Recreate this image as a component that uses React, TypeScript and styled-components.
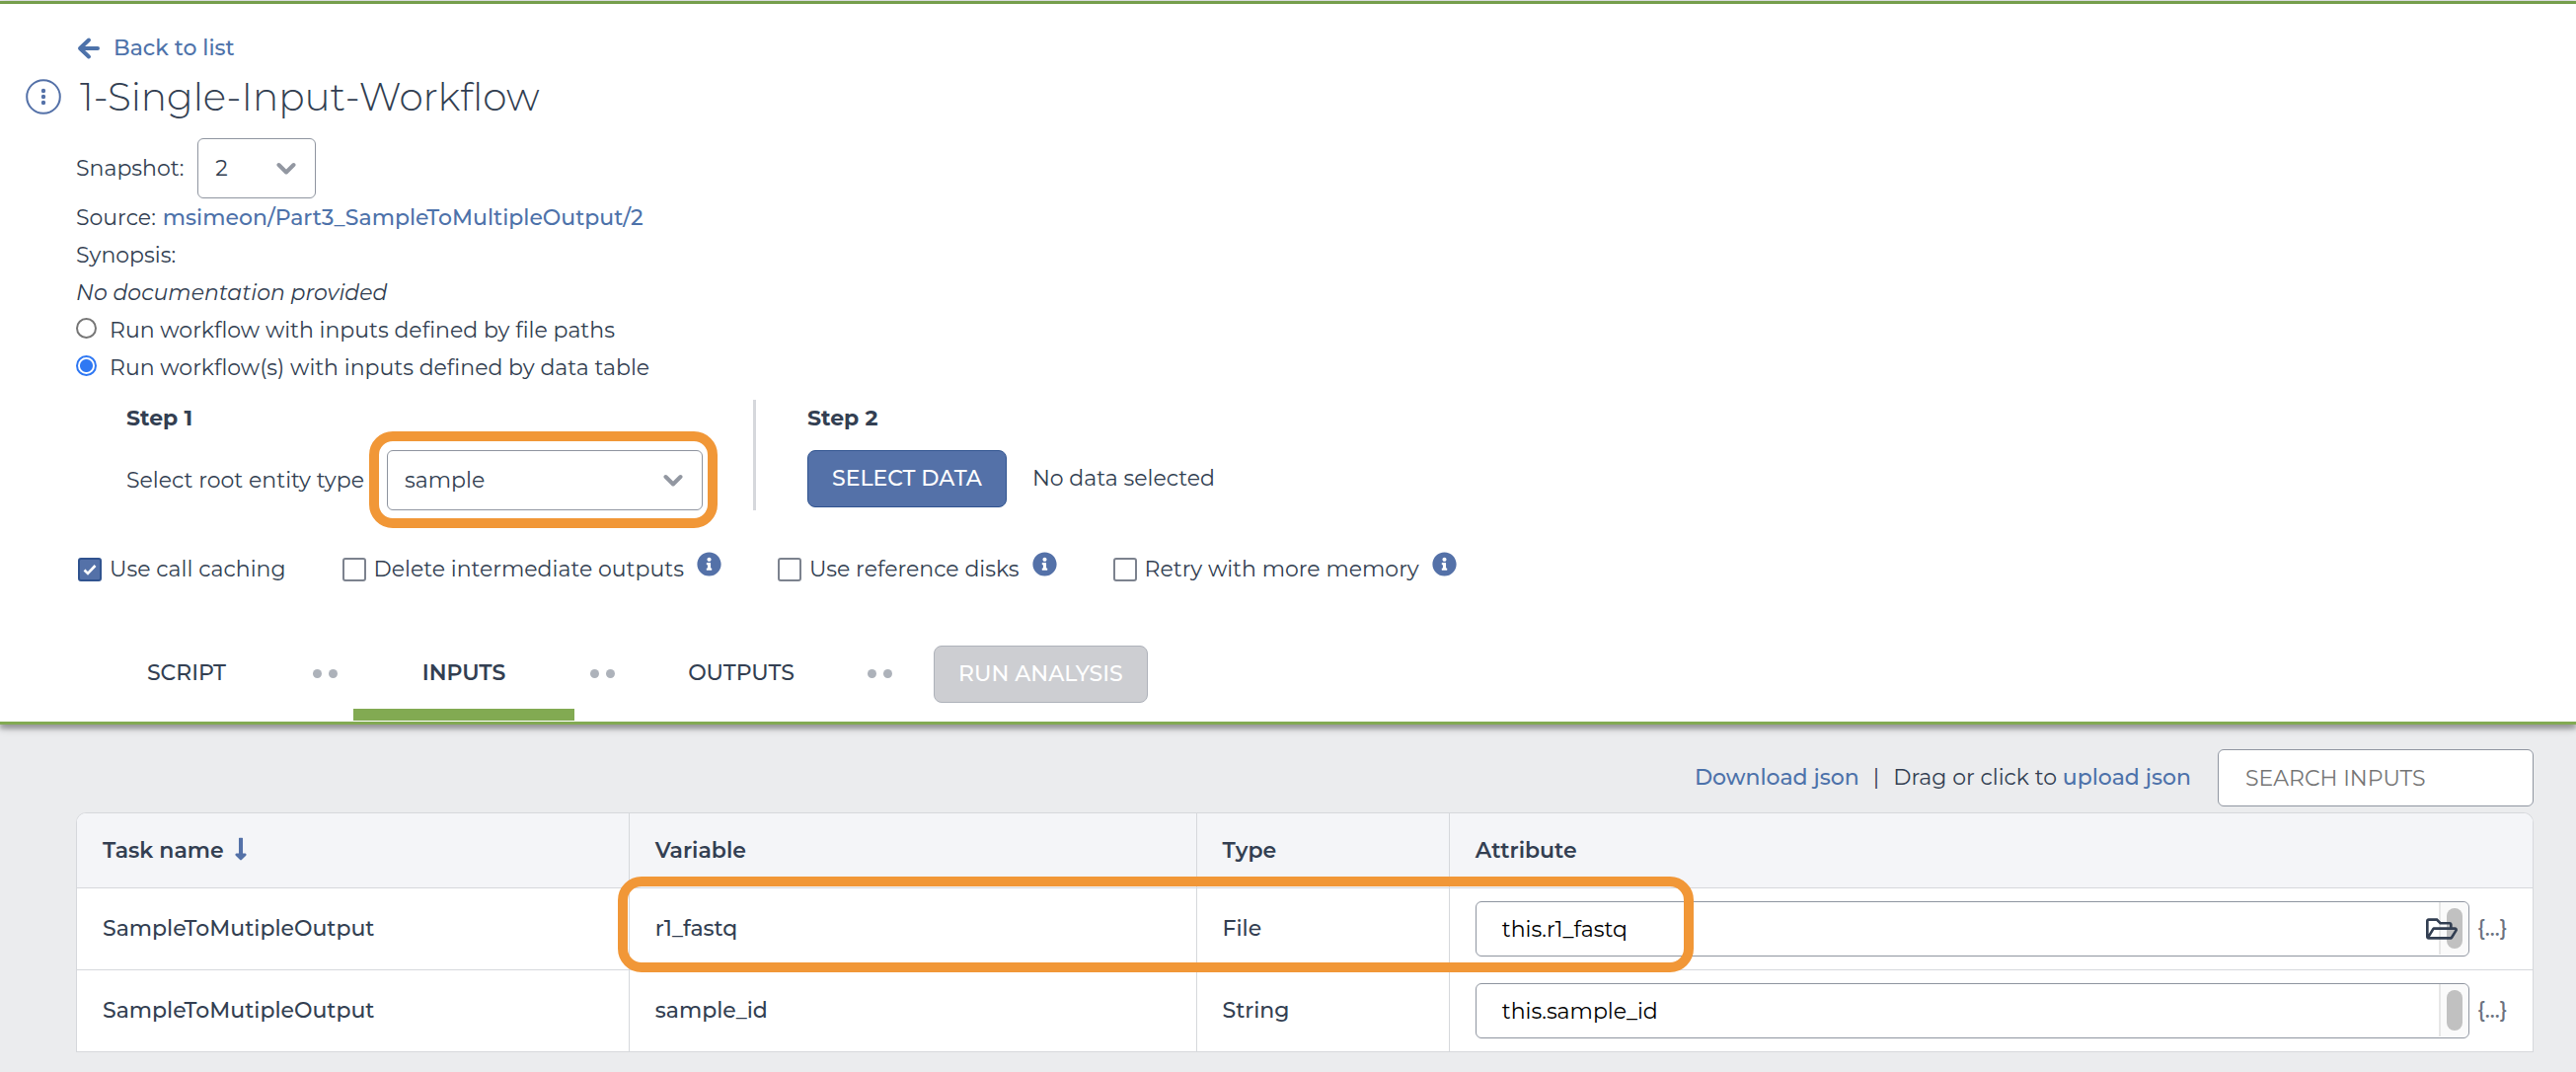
import React from 'react';
import styled, { createGlobalStyle } from 'styled-components';
import { FaInfoCircle, FaLongArrowAltDown, FaRegFolderOpen } from 'react-icons/fa';

const color = {
  text: '#333f52',
  link: '#4d72aa',
  accent: '#5471a8',
  accentDark: '#30538f',
  green: '#82aa52',
  border: '#8f95a0',
  line: '#d6d8dc',
  panel: '#ebecee',
  highlight: '#f19737',
};

const GlobalStyle = createGlobalStyle`
  *, *::before, *::after { box-sizing: border-box; }
  body {
    margin: 0;
    background: ${color.panel};
    color: ${color.text};
    font-family: Montserrat, Inter, 'Open Sans', sans-serif;
    font-size: 22px;
    line-height: 38px;
  }
  button, input, select, textarea { font: inherit; color: inherit; margin: 0; }
`;

const Header = styled.header`
  position: relative;
  margin-top: 1px;
  padding: 26px 43px 0 77px;
  background: #fff;
  border-top: 3px solid #769f4c;
  border-bottom: 3px solid ${color.green};
  box-shadow: 0 3px 8px rgba(0, 0, 0, 0.35), 0 5px 3px rgba(0, 0, 0, 0.12);
`;

const Link = styled.a<{ $strong?: boolean }>`
  color: ${color.link};
  font-weight: ${(p) => (p.$strong ? 500 : 400)};
  text-decoration: none;
`;

const BackLink = styled(Link)`
  display: flex;
  align-items: center;
  gap: 13px;
  width: fit-content;
  font-weight: 500;
`;

const TitleRow = styled.div`
  display: flex;
  align-items: center;
  gap: 19px;
  margin: 7px 0 19px -51px;
`;

const Title = styled.h1`
  margin: 0;
  font-size: 39px;
  line-height: 46px;
  font-weight: 300;
`;

const MenuButton = styled.button`
  display: flex;
  padding: 0;
  border: 0;
  background: none;
  color: ${color.accent};
`;

const Line = styled.div`
  display: flex;
  align-items: center;
  gap: 7px;
`;

const SnapshotLine = styled(Line)`
  gap: 14px;
  margin-bottom: 1px;
`;

const Italic = styled.em`
  font-style: italic;
`;

const SelectBox = styled.div<{ $width: number }>`
  position: relative;
  width: ${(p) => p.$width}px;

  select {
    appearance: none;
    display: block;
    width: 100%;
    height: 61px;
    padding: 0 50px 0 17px;
    border: 1px solid ${color.border};
    border-radius: 6px;
    background: #fff;
  }

  > svg {
    position: absolute;
    right: 20px;
    top: 24px;
    pointer-events: none;
  }
`;

const Highlight = styled.span`
  position: absolute;
  border: 10px solid ${color.highlight};
  border-radius: 24px;
  pointer-events: none;
`;

const SelectHighlight = styled(Highlight)`
  inset: -19px -15px -18px -18px;
`;

const RadioLabel = styled.label`
  display: flex;
  align-items: center;
  gap: 13px;
`;

const Radio = styled.input`
  appearance: none;
  flex: none;
  width: 21px;
  height: 21px;
  margin-bottom: 6px;
  border: 2px solid #767676;
  border-radius: 50%;
  background: #fff;

  &:checked {
    border-color: #2f78f3;
    background: radial-gradient(circle, #2f78f3 6px, #fff 7px);
  }
`;

const Steps = styled.div`
  display: flex;
  margin: 13px 0 41px 51px;
`;

const Step = styled.section`
  display: flex;
  flex-direction: column;
  gap: 13px;

  & + & {
    margin-left: 51px;
    padding-left: 52px;
    border-left: 3px solid ${color.line};
  }
`;

const StepTitle = styled.h2`
  margin: 0;
  font-size: 22px;
  font-weight: 700;
`;

const StepRow = styled.div<{ $gap: number }>`
  display: flex;
  align-items: center;
  gap: ${(p) => p.$gap}px;
`;

const EntityLabel = styled.label`
  width: 246px;
  white-space: nowrap;
`;

const Button = styled.button`
  height: 58px;
  padding: 0 24px;
  border: 1px solid ${color.accentDark};
  border-radius: 8px;
  background: ${color.accent};
  color: #fff;
  font-weight: 500;
  white-space: nowrap;

  &:disabled {
    border-color: #aeb2ba;
    background: #cdced2;
  }
`;

const Options = styled.div`
  display: flex;
  gap: 57px;
  padding-left: 2px;
  margin-bottom: 38px;
`;

const Option = styled.div`
  display: flex;
  align-items: center;
  gap: 13px;

  > svg {
    margin-bottom: 11px;
    color: ${color.accent};
  }
`;

const CheckLabel = styled.label`
  position: relative;
  display: flex;
  align-items: center;
  gap: 8px;

  svg {
    position: absolute;
    left: 4px;
    top: 11px;
  }
`;

const Checkbox = styled.input`
  appearance: none;
  flex: none;
  width: 24px;
  height: 24px;
  border: 2px solid #7c828e;
  border-radius: 3px;
  background: #fff;

  &:checked {
    border-color: ${color.accentDark};
    background: ${color.accent};
  }
`;

const Tabs = styled.nav`
  display: flex;
  align-items: center;
  height: 97px;
`;

const Tab = styled.button<{ $active?: boolean }>`
  align-self: stretch;
  width: 224px;
  margin-bottom: 1px;
  padding: 12px 0 0;
  border: 0;
  border-bottom: 12px solid ${(p) => (p.$active ? color.green : 'transparent')};
  background: none;
  font-weight: ${(p) => (p.$active ? 600 : 500)};
`;

const Dots = styled.span`
  display: flex;
  justify-content: center;
  gap: 7px;
  width: 57px;

  &::before, &::after {
    content: '';
    width: 9px;
    height: 9px;
    border-radius: 50%;
    background: #adb2ba;
  }
`;

const RunButton = styled(Button)`
  margin-left: 26px;
`;

const Main = styled.main`
  padding: 25px 43px 20px 77px;
`;

const Toolbar = styled.div`
  display: flex;
  justify-content: flex-end;
  align-items: center;
  gap: 27px;
  margin-bottom: 6px;
`;

const JsonActions = styled.div`
  display: flex;
  gap: 14px;
`;

const Search = styled.input`
  width: 320px;
  height: 58px;
  padding: 0 27px;
  border: 1px solid ${color.border};
  border-radius: 6px;
  background: #fff;

  &::placeholder { color: #767676; opacity: 1; }
`;

const TableBox = styled.div`
  position: relative;
`;

const RowHighlight = styled(Highlight)`
  left: calc(22.5% - 11px);
  width: calc(33.4% + 258px);
  top: 65px;
  height: 97px;
`;

const Table = styled.table`
  width: 100%;
  table-layout: fixed;
  border-collapse: separate;
  border-spacing: 0;
  border: 1px solid ${color.line};
  border-bottom: 0;
  border-radius: 10px 10px 0 0;
  background: #fff;
  font-weight: 500;

  th, td {
    padding: 0 25px 0 26px;
    border-bottom: 1px solid ${color.line};
    text-align: left;
  }

  th:not(:last-child), td:not(:last-child) { border-right: 1px solid ${color.line}; }

  th {
    height: 76px;
    background: #f4f5f8;
    font-weight: 600;
  }

  th:first-child { border-top-left-radius: 9px; }
  th:last-child { border-top-right-radius: 9px; }

  td { height: 83px; }
`;

const Col = styled.col<{ $share?: number }>`
  width: ${(p) => (p.$share ? `${p.$share}%` : 'auto')};
`;

const SortHeader = styled.span`
  display: flex;
  align-items: center;
  gap: 4px;

  svg {
    margin-bottom: 3px;
    color: ${color.accent};
  }
`;

const AttributeCell = styled.div`
  display: flex;
  align-items: center;
  gap: 8px;
`;

const Field = styled.div`
  position: relative;
  flex: 1;
`;

const AttributeInput = styled.textarea`
  display: block;
  width: 100%;
  height: 56px;
  padding: 9px 50px 5px 26px;
  border: 1px solid ${color.border};
  border-radius: 6px;
  background: #fff;
  color: #000;
  font-weight: 400;
  resize: none;
  overflow: hidden;
`;

const ScrollTrack = styled.span`
  position: absolute;
  top: 1px;
  right: 2px;
  bottom: 2px;
  width: 29px;
  border-left: 2px solid #e7e7e7;
  border-radius: 0 5px 5px 0;
  background: #fafafa;

  &::after {
    content: '';
    position: absolute;
    inset: 6px 5px 6px 6px;
    border-radius: 8px;
    background: #c1c1c1;
  }
`;

const BrowseButton = styled.button`
  position: absolute;
  top: 12px;
  right: 12px;
  display: flex;
  padding: 0;
  border: 0;
  background: none;
`;

const BracesButton = styled.button`
  width: 31px;
  padding: 0;
  border: 0;
  background: none;
  color: #6b7280;
  font-weight: 500;
  text-align: left;
`;

const Chevron = () => (
  <svg width="20" height="14" viewBox="0 0 20 14" aria-hidden="true">
    <path d="M2.5 3 L10 10.5 L17.5 3" fill="none" stroke="#9297a1" strokeWidth="4" strokeLinecap="round" strokeLinejoin="round" />
  </svg>
);

const BackArrow = () => (
  <svg width="25" height="24" viewBox="0 0 25 24" fill="none" stroke="currentColor" strokeWidth="4" strokeLinecap="round" strokeLinejoin="round" aria-hidden="true">
    <path d="M13 3.5 L4 12 L13 20.5 M5 12 H22" />
  </svg>
);

const MenuIcon = () => (
  <svg width="36" height="36" viewBox="0 0 36 36" aria-hidden="true">
    <circle cx="18" cy="18" r="16.8" fill="none" stroke="currentColor" strokeWidth="2" />
    <circle cx="18" cy="12" r="2.2" fill="currentColor" />
    <circle cx="18" cy="18" r="2.2" fill="currentColor" />
    <circle cx="18" cy="24" r="2.2" fill="currentColor" />
  </svg>
);

const CheckMark = () => (
  <svg width="16" height="16" viewBox="0 0 16 16" aria-hidden="true">
    <path d="M2.5 8.5 L6 12 L13.5 4" fill="none" stroke="#fff" strokeWidth="2.6" />
  </svg>
);

const options = [
  { id: 'call-caching', label: 'Use call caching', checked: true, info: false },
  { id: 'delete-intermediate', label: 'Delete intermediate outputs', checked: false, info: true },
  { id: 'reference-disks', label: 'Use reference disks', checked: false, info: true },
  { id: 'retry-memory', label: 'Retry with more memory', checked: false, info: true },
];

const rows = [
  { task: 'SampleToMutipleOutput', variable: 'r1_fastq', type: 'File', attribute: 'this.r1_fastq' },
  { task: 'SampleToMutipleOutput', variable: 'sample_id', type: 'String', attribute: 'this.sample_id' },
];

export default function App() {
  return (
    <>
      <GlobalStyle />
      <Header>
        <BackLink href="#workflows">
          <BackArrow />
          Back to list
        </BackLink>
        <TitleRow>
          <MenuButton type="button" aria-label="Workflow menu">
            <MenuIcon />
          </MenuButton>
          <Title>1-Single-Input-Workflow</Title>
        </TitleRow>
        <SnapshotLine>
          <label htmlFor="snapshot">Snapshot:</label>
          <SelectBox $width={120}>
            <select id="snapshot" defaultValue="2">
              <option value="2">2</option>
            </select>
            <Chevron />
          </SelectBox>
        </SnapshotLine>
        <Line>
          Source:
          <Link $strong href="#source">msimeon/Part3_SampleToMultipleOutput/2</Link>
        </Line>
        <Line>Synopsis:</Line>
        <Line><Italic>No documentation provided</Italic></Line>
        <RadioLabel>
          <Radio type="radio" name="mode" value="paths" />
          Run workflow with inputs defined by file paths
        </RadioLabel>
        <RadioLabel>
          <Radio type="radio" name="mode" value="table" defaultChecked />
          Run workflow(s) with inputs defined by data table
        </RadioLabel>

        <Steps>
          <Step>
            <StepTitle>Step 1</StepTitle>
            <StepRow $gap={18}>
              <EntityLabel htmlFor="entity">Select root entity type</EntityLabel>
              <SelectBox $width={320}>
                <select id="entity" defaultValue="sample">
                  <option value="sample">sample</option>
                </select>
                <Chevron />
                <SelectHighlight />
              </SelectBox>
            </StepRow>
          </Step>
          <Step>
            <StepTitle>Step 2</StepTitle>
            <StepRow $gap={26}>
              <Button type="button">SELECT DATA</Button>
              <span>No data selected</span>
            </StepRow>
          </Step>
        </Steps>

        <Options>
          {options.map((o) => (
            <Option key={o.id}>
              <CheckLabel htmlFor={o.id}>
                <Checkbox id={o.id} type="checkbox" defaultChecked={o.checked} />
                {o.checked && <CheckMark />}
                {o.label}
              </CheckLabel>
              {o.info && <FaInfoCircle size={25} />}
            </Option>
          ))}
        </Options>

        <Tabs>
          <Tab type="button">SCRIPT</Tab>
          <Dots />
          <Tab type="button" $active>INPUTS</Tab>
          <Dots />
          <Tab type="button">OUTPUTS</Tab>
          <Dots />
          <RunButton type="button" disabled>RUN ANALYSIS</RunButton>
        </Tabs>
      </Header>

      <Main>
        <Toolbar>
          <JsonActions>
            <Link $strong href="#download">Download json</Link>
            <span>|</span>
            <span>Drag or click to <Link $strong href="#upload">upload json</Link></span>
          </JsonActions>
          <Search type="search" placeholder="SEARCH INPUTS" aria-label="Search inputs" />
        </Toolbar>

        <TableBox>
          <Table>
            <colgroup>
              <Col $share={22.5} />
              <Col $share={23.1} />
              <Col $share={10.3} />
              <Col />
            </colgroup>
            <thead>
              <tr>
                <th>
                  <SortHeader>
                    Task name
                    <FaLongArrowAltDown size={26} />
                  </SortHeader>
                </th>
                <th>Variable</th>
                <th>Type</th>
                <th>Attribute</th>
              </tr>
            </thead>
            <tbody>
              {rows.map((r) => (
                <tr key={r.variable}>
                  <td>{r.task}</td>
                  <td>{r.variable}</td>
                  <td>{r.type}</td>
                  <td>
                    <AttributeCell>
                      <Field>
                        <AttributeInput rows={1} defaultValue={r.attribute} aria-label={`${r.variable} attribute`} />
                        <ScrollTrack />
                        {r.type === 'File' && (
                          <BrowseButton type="button" aria-label="Browse files">
                            <FaRegFolderOpen size={32} />
                          </BrowseButton>
                        )}
                      </Field>
                      <BracesButton type="button">{'{...}'}</BracesButton>
                    </AttributeCell>
                  </td>
                </tr>
              ))}
            </tbody>
          </Table>
          <RowHighlight />
        </TableBox>
      </Main>
    </>
  );
}
